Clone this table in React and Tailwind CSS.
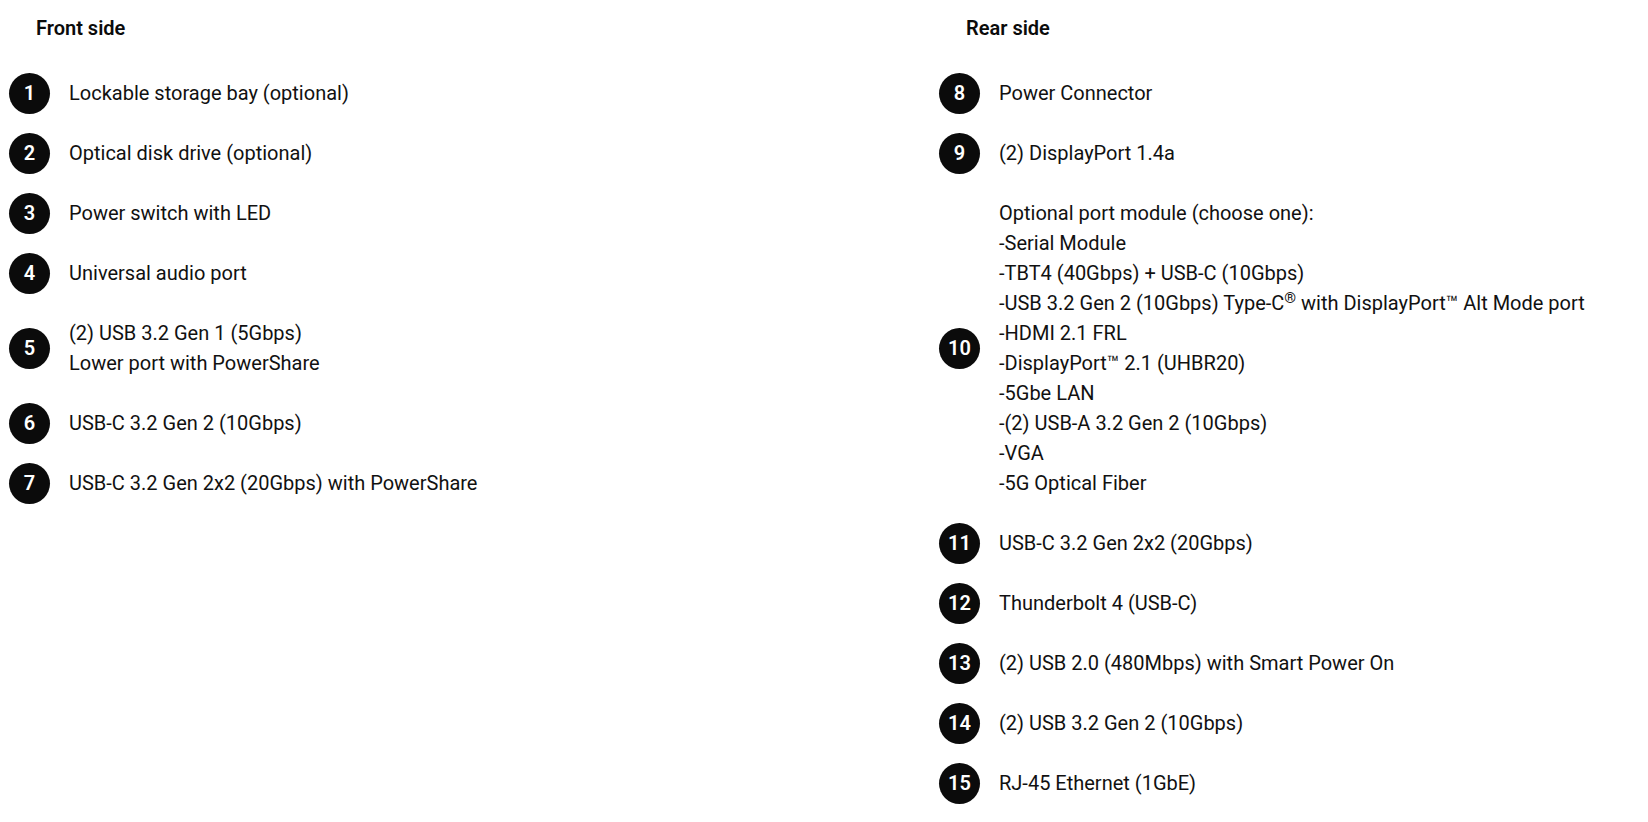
import React from "react";

const front = [
  { n: 1, lines: ["Lockable storage bay (optional)"] },
  { n: 2, lines: ["Optical disk drive (optional)"] },
  { n: 3, lines: ["Power switch with LED"] },
  { n: 4, lines: ["Universal audio port"] },
  { n: 5, lines: ["(2) USB 3.2 Gen 1 (5Gbps)", "Lower port with PowerShare"] },
  { n: 6, lines: ["USB-C 3.2 Gen 2 (10Gbps)"] },
  { n: 7, lines: ["USB-C 3.2 Gen 2x2 (20Gbps) with PowerShare"] },
];

const moduleLines = [
  "Optional port module (choose one):",
  "-Serial Module",
  "-TBT4 (40Gbps) + USB-C (10Gbps)",
  <>
    -USB 3.2 Gen 2 (10Gbps) Type-C<sup>®</sup> with DisplayPort™ Alt Mode port
  </>,
  "-HDMI 2.1 FRL",
  "-DisplayPort™ 2.1 (UHBR20)",
  "-5Gbe LAN",
  "-(2) USB-A 3.2 Gen 2 (10Gbps)",
  "-VGA",
  "-5G Optical Fiber",
];

const rear = [
  { n: 8, lines: ["Power Connector"] },
  { n: 9, lines: ["(2) DisplayPort 1.4a"] },
  { n: 10, lines: moduleLines },
  { n: 11, lines: ["USB-C 3.2 Gen 2x2 (20Gbps)"] },
  { n: 12, lines: ["Thunderbolt 4 (USB-C)"] },
  { n: 13, lines: ["(2) USB 2.0 (480Mbps) with Smart Power On"] },
  { n: 14, lines: ["(2) USB 3.2 Gen 2 (10Gbps)"] },
  { n: 15, lines: ["RJ-45 Ethernet (1GbE)"] },
];

const Item = ({ item }) => (
  <li className="flex items-center py-[15px]">
    {/* circle is taller than one text line; let the text set the row height */}
    <span className="-my-[6px] flex h-[41px] w-[41px] shrink-0 items-center justify-center rounded-full bg-[#0b0b0b] text-[20px] font-semibold leading-none text-white">
      {item.n}
    </span>
    <div className="ml-[19px] text-[20px] leading-[30px] whitespace-nowrap">
      {item.lines.map((line, i) => (
        <div key={i}>{line}</div>
      ))}
    </div>
  </li>
);

const Column = ({ title, items, className }) => (
  <section className={className}>
    <h2 className="ml-[27px] pt-[14px] text-[20px] font-semibold leading-[28px] text-[#0b0b0b]">
      {title}
    </h2>
    <ul className="mt-[21px]">
      {items.map((item) => (
        <Item key={item.n} item={item} />
      ))}
    </ul>
  </section>
);

export default function App() {
  return (
    <div
      className="flex min-h-[822px] w-[1648px] bg-white pl-[9px] text-[#111]"
      style={{ fontFamily: "Roboto, 'Noto Sans', sans-serif" }}
    >
      <Column title="Front side" items={front} className="w-[930px] shrink-0" />
      <Column title="Rear side" items={rear} className="flex-1" />
    </div>
  );
}
